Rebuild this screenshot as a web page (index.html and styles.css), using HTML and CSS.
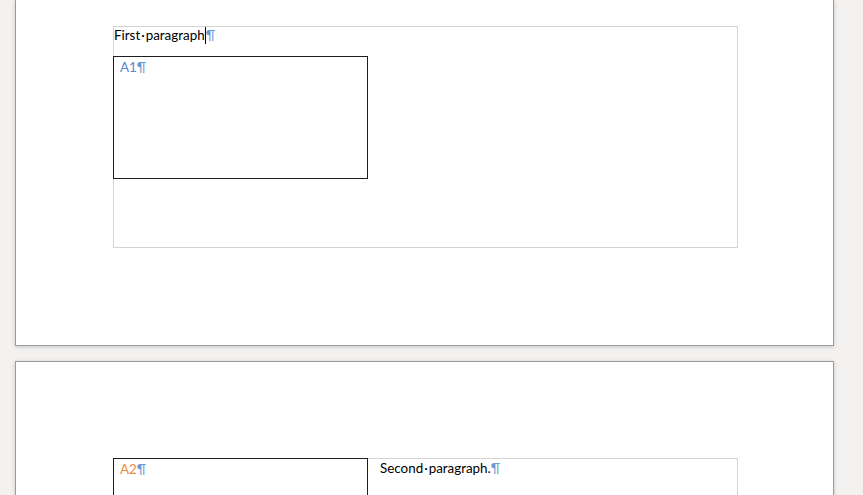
FILE: index.html
```html
<!DOCTYPE html>
<html lang="en">
<head>
  <meta charset="UTF-8">
  <title>Document</title>
  <link rel="stylesheet" href="styles.css">
</head>
<body>

  <div class="canvas">
    <!-- Page 1, scrolled so its top is out of view -->
    <section class="page page-first">
      <div class="frame">
        <p class="para">First<span class="dot">·</span>paragraph<span class="caret"></span><span class="mark">¶</span></p>
        <div class="cell">
          <p class="cell-text blue">A1<span class="mark">¶</span></p>
        </div>
      </div>
    </section>

    <!-- Page 2 -->
    <section class="page page-second">
      <div class="frame frame-split">
        <div class="cell cell-open">
          <p class="cell-text orange">A2<span class="mark">¶</span></p>
        </div>
        <p class="para side">Second<span class="dot">·</span>paragraph.<span class="mark">¶</span></p>
      </div>
    </section>
  </div>

</body>
</html>
```

FILE: styles.css
```css
* {
  margin: 0;
  padding: 0;
  box-sizing: border-box;
}

body {
  background: #f3f2f1;
  font-family: Lato, "Liberation Sans", sans-serif;
  font-size: 13.4px;
  color: #000;
  overflow: hidden;
  height: 495px;
}

.canvas {
  display: flex;
  flex-direction: column;
  gap: 15px;
  padding-left: 15px;
  width: 834px;
}

.page {
  background: #fff;
  border: 1px solid #9c9c9c;
  box-shadow: 0 1px 4px rgba(0, 0, 0, 0.18);
  padding-left: 97px;
}

.page-first {
  border-top: none;
  height: 346px;
  padding-top: 26px;
}

.page-second {
  height: 420px;
  padding-top: 96px;
}

/* outer light table grid */
.frame {
  width: 625px;
  height: 222px;
  border: 1px solid #d4d4d4;
}

.frame-split {
  display: flex;
  align-items: flex-start;
}

.para {
  height: 29px;
  line-height: 15px;
  white-space: nowrap;
}

.dot {
  padding: 0 1px;
}

.mark {
  color: #6b98d6;
}

.caret {
  display: inline-block;
  width: 1px;
  height: 17px;
  background: #000;
  vertical-align: -4px;
}

/* nested cell box */
.cell {
  flex-shrink: 0;
  width: 255px;
  height: 123px;
  margin-left: -1px;
  border: 1px solid #1e1e1e;
  padding: 2px 6px;
}

.cell-open {
  margin-top: -1px;
  height: 60px;
  border-bottom: none;
}

.cell-text {
  line-height: 16px;
}

.blue {
  color: #5b86d4;
}

.orange {
  color: #ee8a45;
}

.side {
  padding-left: 12px;
  padding-top: 2px;
}
```
